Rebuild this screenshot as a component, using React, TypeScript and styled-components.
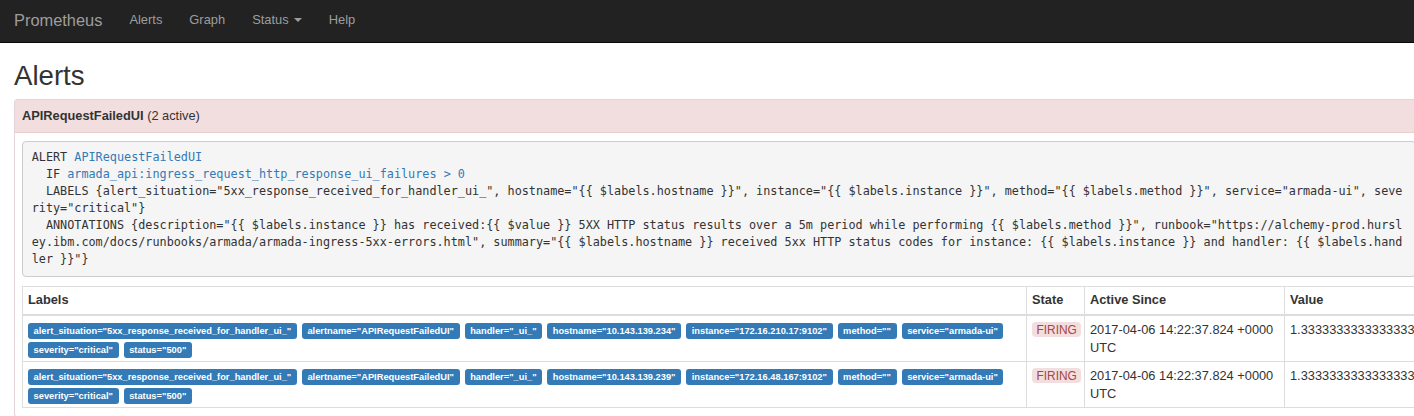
import styled, { createGlobalStyle } from "styled-components";

const GlobalStyle = createGlobalStyle`
  html,
  body {
    margin: 0;
    padding: 0;
    background: #fff;
    overflow: hidden;
  }
  body {
    font-family: "Liberation Sans", Arial, sans-serif;
    font-size: 12.8px;
    line-height: 18px;
    color: #333;
  }
`;

const Navbar = styled.nav`
  display: flex;
  align-items: center;
  height: 43px;
  box-sizing: border-box;
  padding: 0 0 3px 14px;
  background: #222;
  border-bottom: 1px solid #080808;
`;

const Brand = styled.span`
  font-size: 16.4px;
  color: #9d9d9d;
  margin-right: 13.5px;
`;

const NavLink = styled.span`
  display: flex;
  align-items: center;
  padding: 0 13.5px;
  font-size: 12.9px;
  color: #9d9d9d;
`;

const Caret = styled.span`
  width: 0;
  height: 0;
  margin: 1px 0 0 5px;
  border-top: 4px solid #9d9d9d;
  border-left: 4px solid transparent;
  border-right: 4px solid transparent;
`;

const Page = styled.div`
  width: 1410px;
  padding: 0 14px;
`;

const Title = styled.h2`
  margin: 18px 0 8px;
  font-size: 27.6px;
  font-weight: normal;
  line-height: 1.1;
  color: #333;
`;

const Panel = styled.div`
  border: 1px solid #e6d3d6;
  border-radius: 3px 0 0 3px;
`;

const PanelHeading = styled.div`
  padding: 7px;
  background: #f2dede;
  border-bottom: 1px solid #ebccd1;
  line-height: 18px;

  b {
    font-weight: bold;
  }
`;

const PanelBody = styled.div`
  padding: 8px 7px;
`;

const RuleText = styled.pre`
  margin: 0 0 9px;
  padding: 7px 9px 8px 8.7px;
  font-family: "DejaVu Sans Mono", "Liberation Mono", monospace;
  font-size: 11.8px;
  line-height: 17px;
  color: #333;
  background: #f5f5f5;
  border: 1px solid #ccc;
  border-radius: 4px;
  white-space: pre;
`;

const RuleLink = styled.a`
  color: #337ab7;
  text-decoration: none;
`;

const AlertTable = styled.table`
  width: 1394px;
  table-layout: fixed;
  border-collapse: collapse;
  border: 1px solid #ddd;
`;

const Th = styled.th`
  text-align: left;
  font-weight: bold;
  padding: 4px 5px 5px;
  border: 1px solid #ddd;
  border-bottom-width: 2px;
`;

const Td = styled.td<{ $labels?: boolean }>`
  vertical-align: top;
  border: 1px solid #ddd;
  padding: ${(p) => (p.$labels ? "7px 5px 3px 5px" : "5px 2px 4px 5px")};
`;

const LabelList = styled.div`
  display: flex;
  flex-wrap: wrap;
  gap: 3px 5px;
`;

const LabelBadge = styled.span`
  background: #337ab7;
  color: #fff;
  font-weight: bold;
  font-size: 9.3px;
  line-height: 9px;
  padding: 3.5px 5.6px 3.5px;
  border-radius: 3px;
  white-space: nowrap;
`;

const StateBadge = styled.span`
  display: inline-block;
  vertical-align: top;
  margin-top: 1px;
  padding: 1.5px 4.5px;
  font-size: 11.9px;
  line-height: 12px;
  color: #a94442;
  background: #f2dede;
  border-radius: 4px;
`;

// the pre wraps at this many characters in the reference (break-all)
const WRAP = 193;
const wrap = (text: string) => {
  const out: string[] = [];
  for (let i = 0; i < text.length; i += WRAP) out.push(text.slice(i, i + WRAP));
  return out.join("\n");
};

const labelsLine =
  '  LABELS {alert_situation="5xx_response_received_for_handler_ui_", hostname="{{ $labels.hostname }}", instance="{{ $labels.instance }}", method="{{ $labels.method }}", service="armada-ui", severity="critical"}';
const annotationsLine =
  '  ANNOTATIONS {description="{{ $labels.instance }} has received:{{ $value }} 5XX HTTP status results over a 5m period while performing {{ $labels.method }}", runbook="https://alchemy-prod.hursley.ibm.com/docs/runbooks/armada/armada-ingress-5xx-errors.html", summary="{{ $labels.hostname }} received 5xx HTTP status codes for instance: {{ $labels.instance }} and handler: {{ $labels.handler }}"}';

const baseLabels = (hostname: string, instance: string) => [
  ["alert_situation", "5xx_response_received_for_handler_ui_"],
  ["alertname", "APIRequestFailedUI"],
  ["handler", "_ui_"],
  ["hostname", hostname],
  ["instance", instance],
  ["method", ""],
  ["service", "armada-ui"],
  ["severity", "critical"],
  ["status", "500"],
];

const alerts = [
  {
    labels: baseLabels("10.143.139.234", "172.16.210.17:9102"),
    state: "FIRING",
    activeSince: "2017-04-06 14:22:37.824 +0000 UTC",
    value: "1.3333333333333333",
  },
  {
    labels: baseLabels("10.143.139.239", "172.16.48.167:9102"),
    state: "FIRING",
    activeSince: "2017-04-06 14:22:37.824 +0000 UTC",
    value: "1.3333333333333333",
  },
];

const App = () => {
  return (
    <>
      <GlobalStyle />
      <Navbar>
        <Brand>Prometheus</Brand>
        <NavLink>Alerts</NavLink>
        <NavLink>Graph</NavLink>
        <NavLink>
          Status
          <Caret />
        </NavLink>
        <NavLink>Help</NavLink>
      </Navbar>

      <Page>
        <Title>Alerts</Title>
        <Panel>
          <PanelHeading>
            <b>APIRequestFailedUI</b> (2 active)
          </PanelHeading>
          <PanelBody>
            <RuleText>
              {"ALERT "}
              <RuleLink href="#">APIRequestFailedUI</RuleLink>
              {"\n  IF "}
              <RuleLink href="#">
                {"armada_api:ingress_request_http_response_ui_failures > 0"}
              </RuleLink>
              {"\n" + wrap(labelsLine) + "\n" + wrap(annotationsLine)}
            </RuleText>

            <AlertTable>
              <colgroup>
                <col style={{ width: 1004 }} />
                <col style={{ width: 58 }} />
                <col style={{ width: 200 }} />
                <col style={{ width: 132 }} />
              </colgroup>
              <thead>
                <tr>
                  <Th>Labels</Th>
                  <Th>State</Th>
                  <Th>Active Since</Th>
                  <Th>Value</Th>
                </tr>
              </thead>
              <tbody>
                {alerts.map((a, i) => (
                  <tr key={i}>
                    <Td $labels>
                      <LabelList>
                        {a.labels.map(([k, v]) => (
                          <LabelBadge key={k}>{`${k}="${v}"`}</LabelBadge>
                        ))}
                      </LabelList>
                    </Td>
                    <Td>
                      <StateBadge>{a.state}</StateBadge>
                    </Td>
                    <Td>{a.activeSince}</Td>
                    <Td>{a.value}</Td>
                  </tr>
                ))}
              </tbody>
            </AlertTable>
          </PanelBody>
        </Panel>
      </Page>
    </>
  );
};

export default App;
